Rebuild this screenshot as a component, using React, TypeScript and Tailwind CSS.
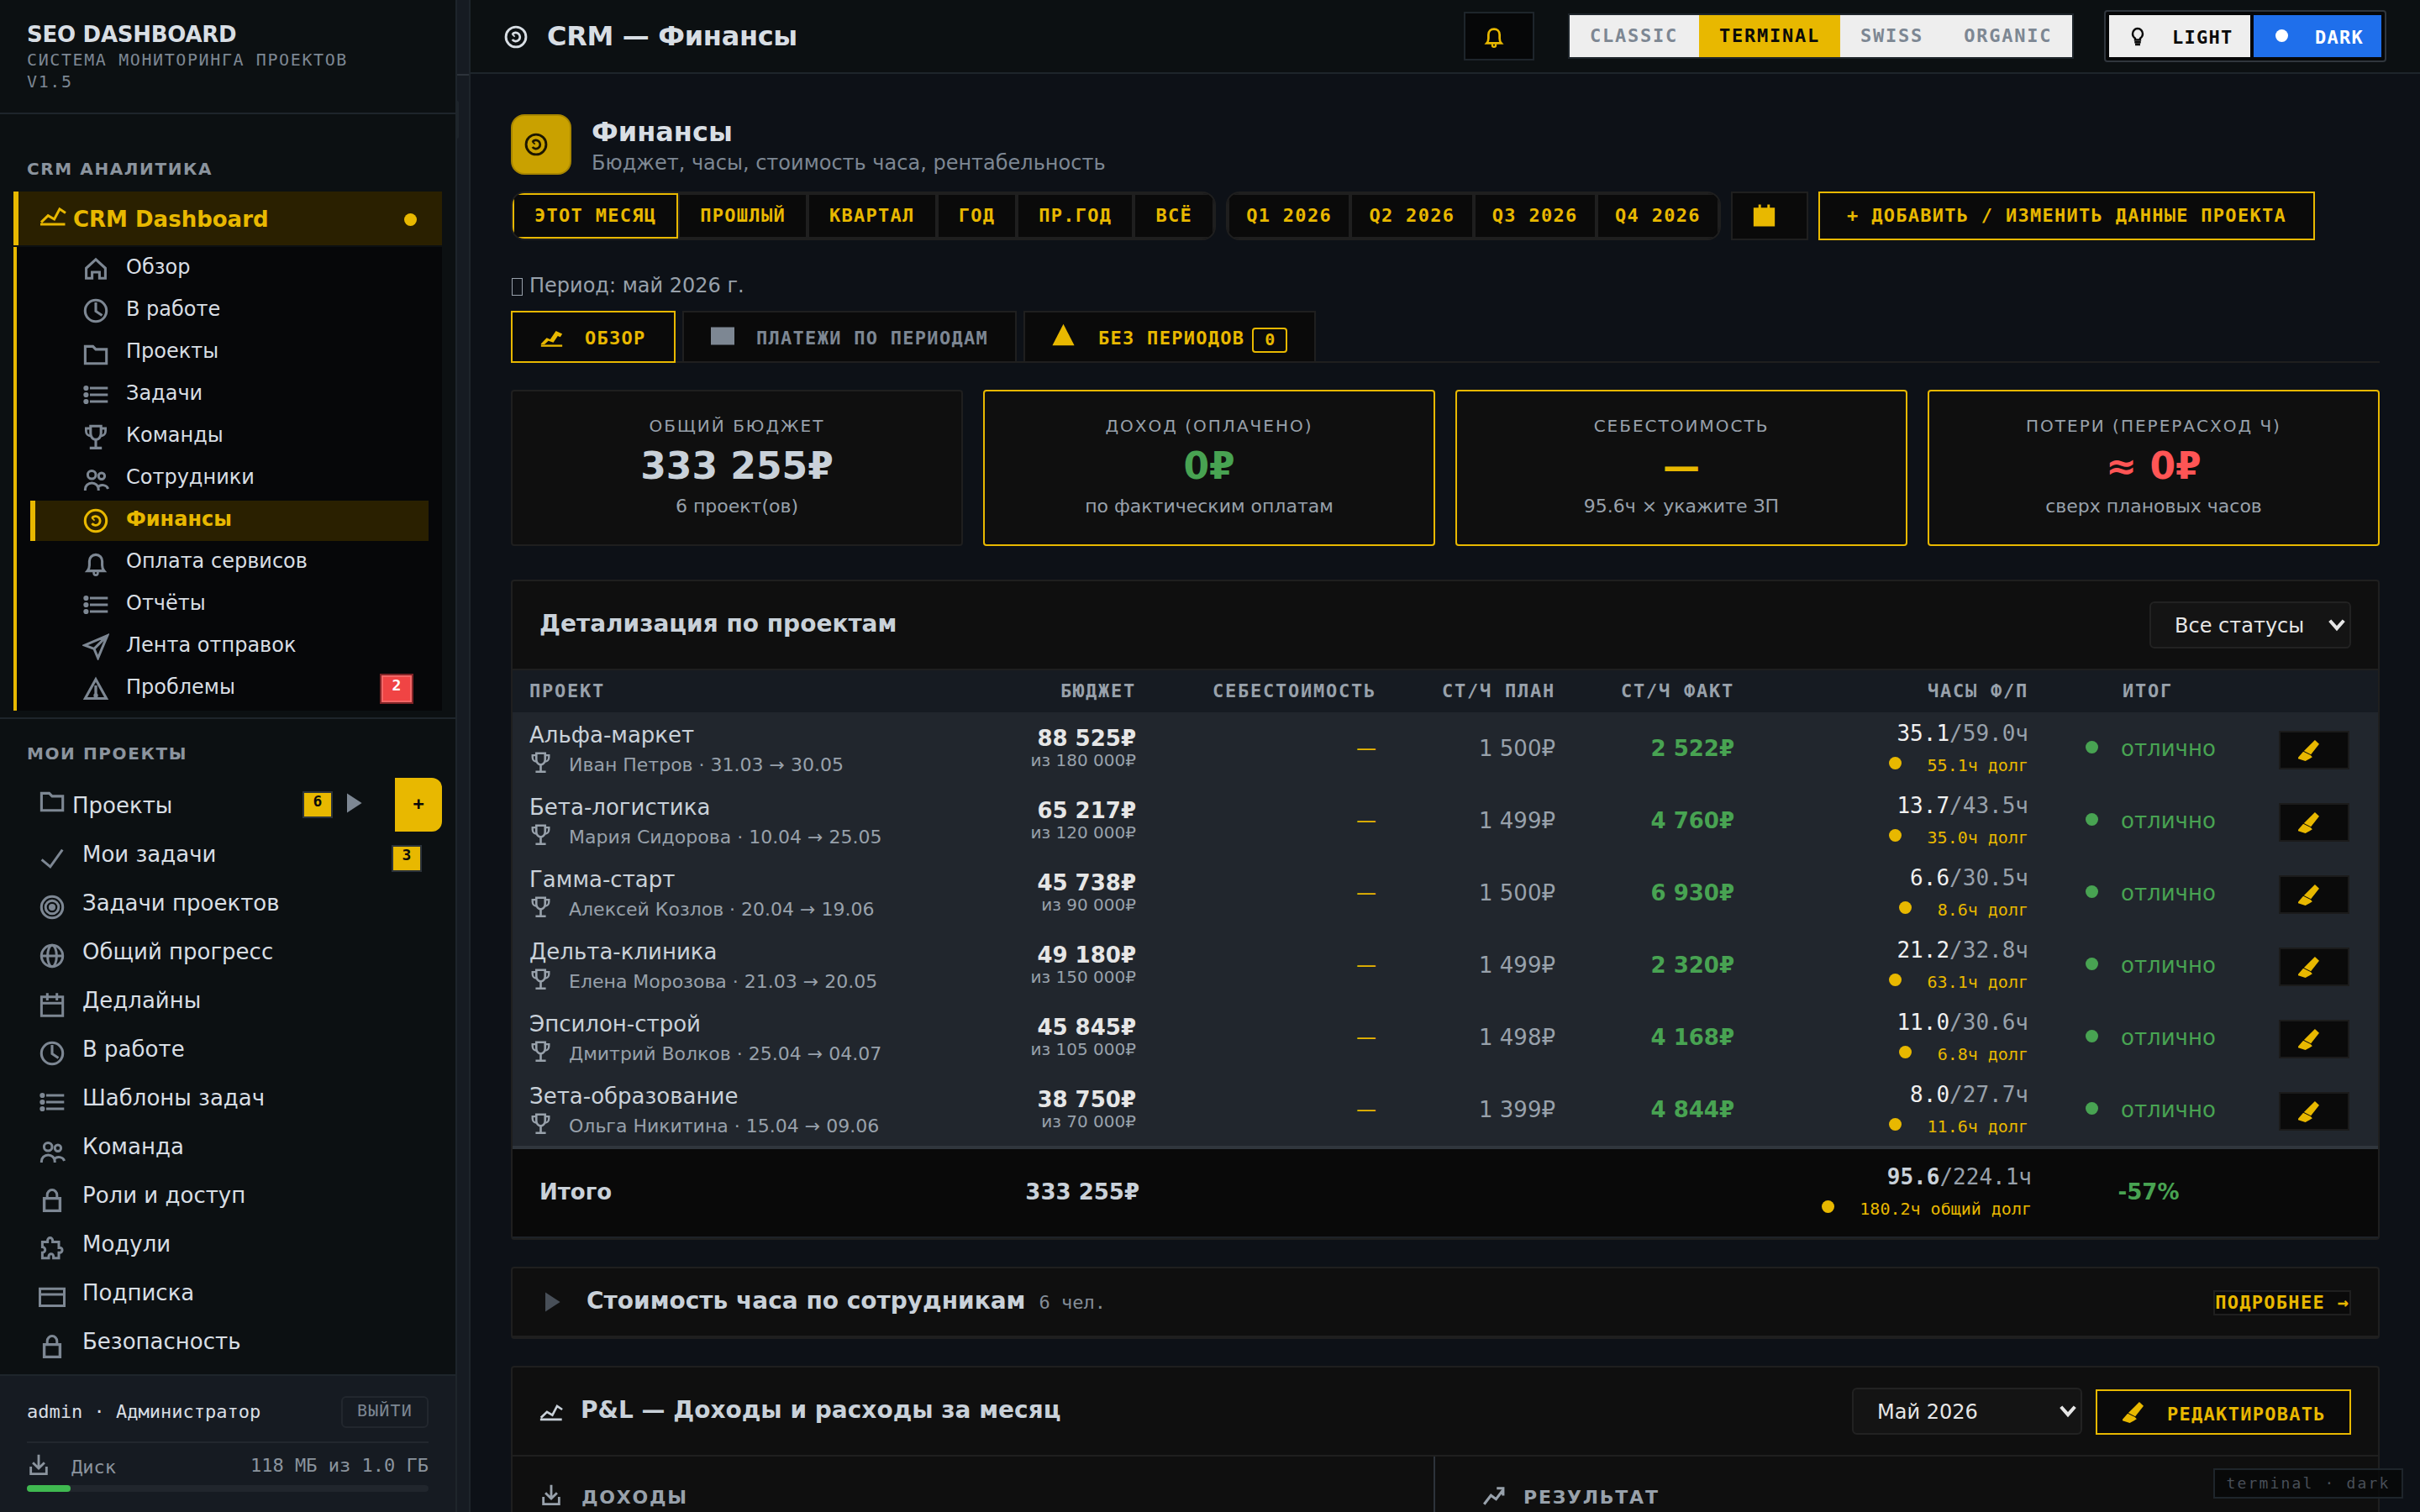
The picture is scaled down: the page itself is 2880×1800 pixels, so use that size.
import React from "react";

type IconName =
  | "home" | "clock" | "folder" | "list" | "trophy" | "users" | "coin" | "bell" | "send" | "warning"
  | "check" | "target" | "globe" | "calendar" | "lock" | "puzzle" | "card" | "chart" | "download"
  | "bulb" | "pencil" | "chartBold" | "square" | "triangle" | "calendarFill" | "trend" | "play" | "chevron";

const ICONS: Record<IconName, React.ReactNode> = {
  home: <path d="M16 4.8 4.6 15.3V27.2H11.6V20H20.4V27.2H27.4V15.3Z" strokeWidth="3.1" />,
  clock: (
    <>
      <circle cx="16" cy="16" r="12.7" strokeWidth="3.1" />
      <path d="M16 6V16.5L23.5 21.5" strokeWidth="3.1" />
    </>
  ),
  folder: <path d="M3.4 8.4H12.6L16 11.9H28.7V28.7H3.4Z" strokeWidth="3.1" />,
  list: (
    <>
      <path d="M9 8H30.3M9 16H30.3M9 24H30.3" strokeWidth="3.1" />
      <g fill="currentColor" stroke="none">
        <circle cx="4.4" cy="8" r="3.1" />
        <circle cx="4.4" cy="16" r="3.1" />
        <circle cx="4.4" cy="24" r="3.1" />
      </g>
    </>
  ),
  trophy: (
    <g strokeWidth="3.1">
      <path d="M9.8 3.2H22.2V12C22.2 16 19.5 19.4 16 19.4S9.8 16 9.8 12Z" />
      <path d="M9.8 6H4.4V9C4.4 12.5 6.8 15 10.2 15M22.2 6H27.6V9C27.6 12.5 25.2 15 21.8 15" strokeWidth="2.8" />
      <path d="M16 19.4V28M8.8 29.4H23.2" />
    </g>
  ),
  users: (
    <g strokeWidth="3">
      <circle cx="11.2" cy="11.3" r="4.8" />
      <circle cx="22.9" cy="12.7" r="3.7" />
      <path d="M3.4 30V28.5A7.9 7.6 0 0 1 19.2 28.5V30" />
      <path d="M18.5 26A6.8 6 0 0 1 30.6 28" />
    </g>
  ),
  coin: (
    <>
      <circle cx="16" cy="16" r="12.7" strokeWidth="3.1" />
      <path d="M11.4 12.8A5.4 5.4 0 1 1 11.4 19.2" strokeWidth="2.9" />
      <path d="M11.4 12.6 14.6 15.6" strokeWidth="1.8" />
    </>
  ),
  bell: (
    <g strokeWidth="3.1">
      <path d="M6.2 25.6H25.8C24.4 24 23.6 22 23.6 19V14C23.6 9.6 20.4 6.4 16 6.4S8.4 9.6 8.4 14V19C8.4 22 7.6 24 6.2 25.6Z" />
      <path d="M13.6 26.5V28.2A2.4 2.4 0 0 0 18.4 28.2V26.5" strokeWidth="2.6" />
    </g>
  ),
  send: <path d="M29.8 2.6 2.8 14.2 14 18.4 18.6 29.4ZM29.8 2.6 14 18.4" strokeWidth="3" />,
  warning: (
    <>
      <path d="M16 4.8 28.6 27.5H3.4Z" strokeWidth="3.1" />
      <path d="M16 12V27" strokeWidth="3.3" />
      <circle cx="16" cy="24" r="2.7" fill="currentColor" stroke="none" />
    </>
  ),
  check: <path d="M3.6 17.4 13.8 25.8 28.3 5.6" strokeWidth="3" />,
  target: (
    <>
      <circle cx="16" cy="16" r="12.7" strokeWidth="3.1" />
      <circle cx="16" cy="16" r="7.8" strokeWidth="3" />
      <circle cx="16" cy="16" r="4" fill="currentColor" stroke="none" />
    </>
  ),
  globe: (
    <g strokeWidth="3">
      <circle cx="16" cy="16" r="12.7" />
      <ellipse cx="16" cy="16" rx="5.4" ry="12.7" />
      <path d="M3 16H29" />
    </g>
  ),
  calendar: (
    <g strokeWidth="3">
      <path d="M3.4 6.8H28.7V29.3H3.4ZM3.4 14.2H28.7" />
      <path d="M10.3 2.2V11M21.7 2.2V11" />
    </g>
  ),
  lock: (
    <g strokeWidth="3">
      <path d="M6.6 14.6H25.4V29.4H6.6Z" strokeWidth="3.4" />
      <path d="M10.2 14.6V10.6A5.8 6 0 0 1 21.8 10.6V14.6" />
    </g>
  ),
  puzzle: (
    <path
      d="M4.4 27.8V21.2A3.2 3.2 0 0 0 4.4 14.6V8.6H10.6V6.6A3 3 0 0 1 16.6 6.6V8.6H24V15.4H25.8A3 3 0 0 1 25.8 21.2H24V27.8H17.6V25.6A2.8 2.8 0 0 0 12 25.6V27.8Z"
      strokeWidth="3"
    />
  ),
  card: <path d="M1.5 6.2H30.5V26.6H1.5ZM1.5 13H30.5" strokeWidth="3" />,
  chart: <path d="M1 25H30.5M2 22.6 10.2 14.6 17.6 19 24 6.8 31 11.4" strokeWidth="3" />,
  download: <path d="M16 1V21M7.5 12.5 16 21 24.5 12.5M4.5 18.5V29H27.5V18.5" strokeWidth="3.5" />,
  bulb: (
    <>
      <path d="M12 22V19.5C9.5 17.8 8 15.3 8 12.3A8 8.3 0 0 1 24 12.3C24 15.3 22.5 17.8 20 19.5V22Z" strokeWidth="3.2" />
      <path d="M11 25.6H21M12 29.4H20" strokeWidth="3.2" />
    </>
  ),
  pencil: (
    <g fill="currentColor" stroke="none">
      <path d="M25.5 0 32 6 19.4 22 8.8 16.6Z" />
      <path d="M7.8 17.6 18.8 23 21.6 26 17.5 28.5 11 32 0 28.6V26.5Z" />
    </g>
  ),
  chartBold: (
    <g fill="currentColor" stroke="none">
      <path d="M1 23H31V25.8H1Z" />
      <path d="M1 21.7 9 13.2 14 15.4 22 3.6 31 7.8 28.2 12.2 24.6 10.8 18.4 19.8 11.4 17.4 6 22.5 1 22.5Z" />
    </g>
  ),
  square: <path d="M0 4H32V28H0Z" fill="currentColor" stroke="none" />,
  triangle: <path d="M16 1 31.5 31H.5Z" fill="currentColor" stroke="none" />,
  calendarFill: <path d="M1 5H8V.5H11.5V5H20.5V.5H24V5H31V31.5H1Z" fill="currentColor" stroke="none" />,
  trend: <path d="M1.5 28 11.5 15 19 20.5 28.5 8M20 4.6H29.4V15.5" strokeWidth="3.8" />,
  play: <path d="M7 4.6 24.6 16 7 27.4Z" fill="currentColor" stroke="none" />,
  chevron: <path d="M5 9 16 21.5 27 9" strokeWidth="5.5" />,
};

function Icon({ name, className }: { name: IconName; className: string }) {
  return (
    <svg viewBox="0 0 32 32" fill="none" stroke="currentColor" strokeWidth="3" className={"shrink-0 " + className}>
      {ICONS[name]}
    </svg>
  );
}

const SANS = "font-['DejaVu_Sans',sans-serif]";
const MONO = "font-['DejaVu_Sans_Mono',monospace]";

const SUB_NAV: { icon: IconName; label: string; active?: boolean; badge?: string }[] = [
  { icon: "home", label: "Обзор" },
  { icon: "clock", label: "В работе" },
  { icon: "folder", label: "Проекты" },
  { icon: "list", label: "Задачи" },
  { icon: "trophy", label: "Команды" },
  { icon: "users", label: "Сотрудники" },
  { icon: "coin", label: "Финансы", active: true },
  { icon: "bell", label: "Оплата сервисов" },
  { icon: "list", label: "Отчёты" },
  { icon: "send", label: "Лента отправок" },
  { icon: "warning", label: "Проблемы", badge: "2" },
];

const NAV: { icon: IconName; label: string; badge?: string }[] = [
  { icon: "check", label: "Мои задачи", badge: "3" },
  { icon: "target", label: "Задачи проектов" },
  { icon: "globe", label: "Общий прогресс" },
  { icon: "calendar", label: "Дедлайны" },
  { icon: "clock", label: "В работе" },
  { icon: "list", label: "Шаблоны задач" },
  { icon: "users", label: "Команда" },
  { icon: "lock", label: "Роли и доступ" },
  { icon: "puzzle", label: "Модули" },
  { icon: "card", label: "Подписка" },
  { icon: "lock", label: "Безопасность" },
];

const ROWS = [
  { name: "Альфа-маркет", sub: "Иван Петров · 31.03 → 30.05", budget: "88 525₽", of: "из 180 000₽", plan: "1 500₽", fact: "2 522₽", h: "35.1", hp: "/59.0ч", debt: "55.1ч долг" },
  { name: "Бета-логистика", sub: "Мария Сидорова · 10.04 → 25.05", budget: "65 217₽", of: "из 120 000₽", plan: "1 499₽", fact: "4 760₽", h: "13.7", hp: "/43.5ч", debt: "35.0ч долг" },
  { name: "Гамма-старт", sub: "Алексей Козлов · 20.04 → 19.06", budget: "45 738₽", of: "из 90 000₽", plan: "1 500₽", fact: "6 930₽", h: "6.6", hp: "/30.5ч", debt: "8.6ч долг" },
  { name: "Дельта-клиника", sub: "Елена Морозова · 21.03 → 20.05", budget: "49 180₽", of: "из 150 000₽", plan: "1 499₽", fact: "2 320₽", h: "21.2", hp: "/32.8ч", debt: "63.1ч долг" },
  { name: "Эпсилон-строй", sub: "Дмитрий Волков · 25.04 → 04.07", budget: "45 845₽", of: "из 105 000₽", plan: "1 498₽", fact: "4 168₽", h: "11.0", hp: "/30.6ч", debt: "6.8ч долг" },
  { name: "Зета-образование", sub: "Ольга Никитина · 15.04 → 09.06", budget: "38 750₽", of: "из 70 000₽", plan: "1 399₽", fact: "4 844₽", h: "8.0", hp: "/27.7ч", debt: "11.6ч долг" },
];

const KPIS = [
  { label: "ОБЩИЙ БЮДЖЕТ", value: "333 255₽", sub: "6 проект(ов)", border: "border-[#1f1f1f]", color: "text-[#c9d1d9]" },
  { label: "ДОХОД (ОПЛАЧЕНО)", value: "0₽", sub: "по фактическим оплатам", border: "border-[#e8b800]", color: "text-[#48a352]" },
  { label: "СЕБЕСТОИМОСТЬ", value: "—", sub: "95.6ч × укажите ЗП", border: "border-[#e8b800]", color: "text-[#e8b800]" },
  { label: "ПОТЕРИ (ПЕРЕРАСХОД Ч)", value: "≈ 0₽", sub: "сверх плановых часов", border: "border-[#e8b800]", color: "text-[#ff5555]" },
];

const GRID = "grid grid-cols-[520px_222px_286px_213px_213px_350px_284px_132px]";
const BTN = MONO + " text-[22px] font-bold tracking-[1.28px] whitespace-pre";

function Sidebar() {
  return (
    <aside className="flex h-full w-[544px] shrink-0 flex-col border-r-2 border-[#1e252b] bg-[#0c1012]">
      <div className="h-[136px] shrink-0 border-b-2 border-[#1e252b] px-8 pt-[25px]">
        <div className="text-[26px] leading-8 font-bold tracking-[-0.26px] text-[#d8dee4]">SEO DASHBOARD</div>
        <div className={MONO + " mt-px w-[400px] text-[20px] leading-[26px] tracking-[1.6px] text-[#7d8793]"}>
          СИСТЕМА МОНИТОРИНГА ПРОЕКТОВ V1.5
        </div>
      </div>
      <div className="mt-[49px] pl-8 text-[20px] leading-8 font-bold tracking-[1.6px] text-[#8b949e]">CRM АНАЛИТИКА</div>
      <div className="mt-[11px] ml-4 flex h-16 w-[510px] shrink-0 border-l-[6px] border-[#e8b800] bg-[#2a2000] text-[#e8b800]">
        <Icon name="chart" className="mt-[14px] ml-[25px] size-8" />
        <span className="ml-2 text-[26px] leading-[66px] font-bold">CRM Dashboard</span>
        <span className="mt-[26px] mr-[30px] ml-auto size-[15px] rounded-full bg-[#e8b800]" />
      </div>
      <div className="mt-0.5 ml-4 h-[552px] w-[510px] shrink-0 border-l-4 border-[#e8b800] bg-[#060709] pt-0.5 pr-4 pl-4">
        {SUB_NAV.map((n) => (
          <div
            key={n.label}
            className={
              "mb-0.5 flex h-12 items-start border-l-[6px] pl-14 " +
              (n.active ? "border-[#e8b800] bg-[#2a2000] text-[#e8b800]" : "border-transparent text-[#7d8793]")
            }
          >
            <Icon name={n.icon} className="mt-2 size-8" />
            <span className={"ml-5 text-[24px] leading-[44px] " + (n.active ? "font-bold text-[#e8b800]" : "text-[#d8dee4]")}>
              {n.label}
            </span>
            {n.badge && (
              <span className={MONO + " mt-1.5 mr-[18px] ml-auto h-9 w-10 border-2 border-[#7f2326] bg-[#f04444] pt-0.5 text-center text-[18px] leading-5 font-bold text-white shadow-[inset_0_0_0_2px_#f26666]"}>
                {n.badge}
              </span>
            )}
          </div>
        ))}
      </div>
      <div className="mt-2 h-0.5 shrink-0 bg-[#1e252b]" />
      <div className="mt-[25px] pl-8 text-[20px] leading-8 font-bold tracking-[1.6px] text-[#8b949e]">МОИ ПРОЕКТЫ</div>
      <div className="mt-[13px] ml-4 flex h-16 w-[510px] shrink-0 items-start text-[#7d8793]">
        <Icon name="folder" className="mt-[10px] ml-[30px] size-8" />
        <span className="ml-2 text-[26px] leading-[66px] text-[#d8dee4]">Проекты</span>
        <span className={MONO + " mt-4 ml-auto h-8 w-9 border-2 border-[#2c333a] bg-[#e8b800] text-center text-[18px] leading-5 font-bold text-[#0a0a0a]"}>6</span>
        <Icon name="play" className="mt-[14px] ml-[10px] size-8" />
        <span className={MONO + " ml-8 h-16 w-14 rounded-r-[12px] bg-[#e8b800] text-center text-[22px] leading-[62px] font-bold text-[#0a0a0a]"}>+</span>
      </div>
      <div className="mt-[3px]">
        {NAV.map((n) => (
          <div key={n.label} className="flex h-[58px] items-start pl-[46px] text-[#7d8793]">
            <Icon name={n.icon} className="mt-[13px] size-8" />
            <span className="ml-5 text-[26px] leading-[48px] text-[#d8dee4]">{n.label}</span>
            {n.badge && (
              <span className={MONO + " mt-[13px] mr-10 ml-auto h-8 w-9 border-2 border-[#2c333a] bg-[#e8b800] text-center text-[18px] leading-5 font-bold text-[#0a0a0a]"}>
                {n.badge}
              </span>
            )}
          </div>
        ))}
      </div>
      <div className={MONO + " mt-auto h-[164px] shrink-0 border-t-2 border-[#1e252b] bg-[#161b22] px-8 pt-6 text-[22px]"}>
        <div className="flex h-[38px] justify-between">
          <span className="leading-[37px] text-[#d8dee4]">admin · Администратор</span>
          <span className="h-[38px] w-[104px] rounded-[6px] border-2 border-[#22272e] text-center text-[20px] leading-[30px] tracking-[1.2px] text-[#7d8793]">
            ВЫЙТИ
          </span>
        </div>
        <div className="mt-4 h-0.5 bg-[#22272e]" />
        <div className="flex h-[50px] items-start text-[#8b949e]">
          <Icon name="download" className="mt-[13px] ml-px size-[26px]" />
          <span className="mt-[13px] ml-[26px] leading-8">Диск</span>
          <span className="mt-[11px] ml-auto leading-8">118 МБ из 1.0 ГБ</span>
        </div>
        <div className="h-2 rounded-full bg-[#21262d]">
          <div className="h-2 w-[52px] rounded-full bg-[#3fb950]" />
        </div>
      </div>
    </aside>
  );
}

function TopBar() {
  const seg = MONO + " pl-6 text-[22px] leading-[50px] font-bold tracking-[1.76px] ";
  return (
    <header className="flex h-[88px] shrink-0 border-b-2 border-[#1e252b] bg-[#0c1012] pr-10 pl-[39px] text-[#d8dee4]">
      <Icon name="coin" className="mt-[29px] size-[30px]" />
      <h1 className="ml-[22px] text-[32px] leading-[86px] font-bold tracking-[-0.32px]">CRM — Финансы</h1>
      <div className="mt-[14px] ml-auto h-[58px] w-[84px] border-2 border-[#1e252b] bg-[#060708] text-[#e8b800]">
        <Icon name="bell" className="mt-[13px] ml-[20px] size-[28px]" />
      </div>
      <div className="mt-4 ml-10 flex h-[54px] w-[602px] border-2 border-[#1e252b] bg-[#eeeeee]">
        <span className={seg + "pr-[25px] text-[#7d8793]"}>CLASSIC</span>
        <span className={seg + "bg-[#e8b800] pr-6 text-[#0a0a0a]"}>TERMINAL</span>
        <span className={seg + "pr-6 text-[#7d8793]"}>SWISS</span>
        <span className={seg + "pr-5 text-[#7d8793]"}>ORGANIC</span>
      </div>
      <div className={BTN + " mt-3 ml-9 flex h-[62px] w-[336px] gap-1 rounded-[4px] border-2 border-[#30363d] bg-[#060708] p-1"}>
        <span className="flex w-[168px] bg-[#eeeeee] text-[#0a0a0a]">
          <Icon name="bulb" className="mt-[13px] ml-[22px] size-[24px]" />
          <span className="ml-[29px] leading-[53px]">LIGHT</span>
        </span>
        <span className="flex w-[152px] bg-[#1f6feb] text-white">
          <span className="mt-[17px] ml-[26px] size-[15px] rounded-full bg-white" />
          <span className="ml-8 leading-[53px]">DARK</span>
        </span>
      </div>
    </header>
  );
}

function PeriodGroup({ items, pad, active }: { items: string[]; pad: string; active?: string }) {
  return (
    <div className="flex h-[58px] overflow-hidden rounded-[16px] border-2 border-[#1f1f1f] bg-[#0a0a0a]">
      {items.map((t) => (
        <span
          key={t}
          className={BTN + " border-2 leading-[50px] text-[#e8b800] " + pad + (t === active ? " border-[#e8b800]" : " border-[#1f1f1f]")}
        >
          {t}
        </span>
      ))}
    </div>
  );
}

function Controls() {
  return (
    <div className="mt-5 flex h-[58px] gap-3">
      <PeriodGroup items={["ЭТОТ МЕСЯЦ", "ПРОШЛЫЙ", "КВАРТАЛ", "ГОД", "ПР.ГОД", "ВСЁ"]} pad="px-6" active="ЭТОТ МЕСЯЦ" />
      <PeriodGroup items={["Q1 2026", "Q2 2026", "Q3 2026", "Q4 2026"]} pad="px-[20.3px]" />
      <div className="h-[58px] w-[92px] border-2 border-[#1f1f1f] bg-[#0a0a0a] text-[#e8b800]">
        <Icon name="calendarFill" className="mt-[13px] ml-6 size-[27px]" />
      </div>
      <div className={BTN + " border-2 border-[#e8b800] bg-[#0a0a0a] px-8 leading-[54px] text-[#e8b800]"}>
        + ДОБАВИТЬ / ИЗМЕНИТЬ ДАННЫЕ ПРОЕКТА
      </div>
    </div>
  );
}

function Tabs() {
  const tab = BTN + " flex h-[62px] border-2 bg-[#0a0a0a] ";
  return (
    <div className="mt-[14px] flex h-[62px] gap-2 shadow-[inset_0_-2px_0_#1f1f1f]">
      <div className={tab + "w-[196px] border-[#e8b800] text-[#e8b800]"}>
        <Icon name="chartBold" className="mt-[19px] ml-[33px] size-[27px]" />
        <span className="mt-0.5 ml-[26px] leading-[58px]">ОБЗОР</span>
      </div>
      <div className={tab + "w-[398px] border-[#1f1f1f] text-[#7d8793]"}>
        <Icon name="square" className="mt-[14px] ml-8 size-7" />
        <span className="mt-0.5 ml-[26px] leading-[58px]">ПЛАТЕЖИ ПО ПЕРИОДАМ</span>
      </div>
      <div className={tab + "w-[348px] border-[#1f1f1f] text-[#e8b800]"}>
        <Icon name="triangle" className="mt-[13px] ml-8 size-[27px]" />
        <span className="mt-0.5 ml-7 leading-[58px]">БЕЗ ПЕРИОДОВ</span>
        <span className="mt-[18px] ml-[9px] h-[30px] w-[42px] rounded-[4px] border-2 border-[#e8b800] text-center text-[20px] leading-[24px] tracking-normal">0</span>
      </div>
    </div>
  );
}

function Select({ label, className }: { label: string; className: string }) {
  return (
    <div className={"flex h-14 rounded-[6px] border-2 border-[#222222] bg-[#141414] pl-7 text-[24px] leading-[54px] text-[#e6e6e6] " + className}>
      <span>{label}</span>
      <Icon name="chevron" className="mt-[14px] mr-[3px] ml-auto size-6" />
    </div>
  );
}

function ProjectTable() {
  return (
    <section className="mt-10 rounded-[4px] border-2 border-[#1f1f1f] bg-[#0f0f0f]">
      <div className="flex h-[106px] justify-between border-b-2 border-[#1f1f1f] pr-8 pl-8">
        <h2 className="text-[28px] leading-[101px] font-bold text-[#c9d1d9]">Детализация по проектам</h2>
        <Select label="Все статусы" className="mt-6 w-[240px]" />
      </div>
      <div className={GRID + " " + MONO + " h-[50px] bg-[#161b22] text-right text-[22px] leading-[50px] font-bold tracking-[1.76px] text-[#98a1ab]"}>
        <span className="pl-5 text-left">ПРОЕКТ</span>
        <span>БЮДЖЕТ</span>
        <span>СЕБЕСТОИМОСТЬ</span>
        <span>СТ/Ч ПЛАН</span>
        <span>СТ/Ч ФАКТ</span>
        <span>ЧАСЫ Ф/П</span>
        <span className="text-center">ИТОГ</span>
      </div>
      {ROWS.map((r) => (
        <div key={r.name} className={GRID + " h-[86px] bg-[#21262d] text-right text-[26px] leading-[86px]"}>
          <div className="pt-[11px] pl-5 text-left">
            <div className="leading-8 text-[#c9d1d9]">{r.name}</div>
            <div className="mt-[3px] flex text-[22px] leading-8 text-[#98a1ab]">
              <Icon name="trophy" className="size-[27px]" />
              <span className="mt-px ml-5">{r.sub}</span>
            </div>
          </div>
          <div className="pt-[15px]">
            <div className="leading-8 font-bold text-[#e6e6e6]">{r.budget}</div>
            <div className="text-[20px] leading-5 text-[#98a1ab]">{r.of}</div>
          </div>
          <div className="text-[24px] text-[#e8b800]">—</div>
          <div className="text-[#98a1ab]">{r.plan}</div>
          <div className="font-bold text-[#48a352]">{r.fact}</div>
          <div className={MONO + " pt-[9px]"}>
            <div className="leading-8 text-[#98a1ab]">
              <span className="text-[#f0f0f0]">{r.h}</span>
              {r.hp}
            </div>
            <div className="mt-1.5 flex items-start justify-end text-[20px] leading-8 text-[#e8b800]">
              <span className="mt-[6px] mr-[31px] size-[15px] rounded-full bg-[#e8b800]" />
              {r.debt}
            </div>
          </div>
          <div className="flex pl-[68px] text-[#48a352]">
            <span className="mt-[34px] size-[15px] rounded-full bg-[#48a352]" />
            <span className="ml-[27px]">отлично</span>
          </div>
          <div className="pt-[22px] pl-[14px]">
            <div className="h-[46px] w-[84px] border-2 border-[#1b1b1b] bg-[#0a0a0a] text-[#e8b800]">
              <Icon name="pencil" className="mt-[9px] ml-[21px] size-[25px]" />
            </div>
          </div>
        </div>
      ))}
      <div className={GRID + " h-[110px] border-t-4 border-b-2 border-t-[#30363d] border-b-[#1e2228] bg-[#090909] text-right text-[26px] leading-[103px] font-bold text-[#c9d1d9]"}>
        <span className="pl-8 text-left">Итого</span>
        <span className="-mr-1">333 255₽</span>
        <span />
        <span />
        <span />
        <div className={MONO + " -mr-1 pt-[17px]"}>
          <div className="leading-8">
            95.6<span className="font-normal text-[#98a1ab]">/224.1ч</span>
          </div>
          <div className="mt-1.5 flex items-start justify-end text-[20px] leading-8 font-normal text-[#e8b800]">
            <span className="mt-[6px] mr-[30px] size-[15px] rounded-full bg-[#e8b800]" />
            180.2ч общий долг
          </div>
        </div>
        <span className="pl-0.5 text-center text-[#48a352]">-57%</span>
      </div>
    </section>
  );
}

function HourCost() {
  return (
    <section className="mt-8 flex h-[86px] items-start rounded-[4px] border-2 border-b-4 border-[#1f1f1f] bg-[#0f0f0f] pr-8 pl-8">
      <Icon name="play" className="mt-6 size-8 text-[#484f58]" />
      <h2 className="ml-6 text-[28px] leading-[77px] font-bold text-[#c9d1d9]">Стоимость часа по сотрудникам</h2>
      <span className={MONO + " ml-4 text-[22px] leading-[81px] text-[#848d97]"}>6 чел.</span>
      <span className={BTN + " mt-[26px] ml-auto h-[30px] border-2 border-[#1f1f1f] bg-[#0a0a0a] leading-[26px] text-[#e8b800]"}>ПОДРОБНЕЕ →</span>
    </section>
  );
}

function ProfitLoss() {
  return (
    <section className="mt-8 h-[300px] shrink-0 rounded-[4px] border-2 border-[#1f1f1f] bg-[#0f0f0f]">
      <div className="flex h-[106px] items-start border-b-2 border-[#1f1f1f] pr-8 pl-8 text-[#c9d1d9]">
        <Icon name="chart" className="mt-[40px] size-[28px]" />
        <h2 className="ml-[21px] text-[28px] leading-[101px] font-bold">P&amp;L — Доходы и расходы за месяц</h2>
        <Select label="Май 2026" className="mt-6 ml-auto w-[274px]" />
        <div className={BTN + " mt-[26px] ml-4 flex h-[54px] w-[304px] border-2 border-[#e8b800] bg-[#0a0a0a] text-[#e8b800]"}>
          <Icon name="pencil" className="mt-[13px] ml-[30px] size-[25px]" />
          <span className="ml-7 leading-[56px]">РЕДАКТИРОВАТЬ</span>
        </div>
      </div>
      <div className="flex h-[190px] text-[22px] leading-8 font-bold tracking-[1.76px] text-[#98a1ab]">
        <div className="flex w-[1098px] border-r-2 border-[#2d333b] pt-[33px] pl-[33px]">
          <Icon name="download" className="size-[26px]" />
          <span className="ml-[23px]">ДОХОДЫ</span>
        </div>
        <div className="flex pt-[33px] pl-[57px]">
          <Icon name="trend" className="mt-px size-[26px]" />
          <span className="ml-[22px]">РЕЗУЛЬТАТ</span>
        </div>
      </div>
    </section>
  );
}

export default function App() {
  return (
    <div className={SANS + " relative flex h-[1800px] w-[2880px] overflow-hidden bg-[#0d1117]"}>
      <Sidebar />
      <div className="h-full w-4 shrink-0 border-r-2 border-[#1e252b] bg-[#161b22] pt-[88px]">
        <div className="h-0.5 bg-[#2d333b]" />
        <div className="mt-[30px] h-[45px] w-0.5 rounded-r-sm bg-[#1e252b]" />
      </div>
      <div className="flex min-w-0 flex-1 flex-col">
        <TopBar />
        <main className="px-12 pt-12">
          <div className="flex h-[72px] gap-6">
            <div className="size-[72px] rounded-[16px] border-2 border-[#a88600] bg-[#c9a100] text-[#1c1600]">
              <Icon name="coin" className="mt-[19px] ml-[13px] size-[30px]" />
            </div>
            <div>
              <div className="text-[32px] leading-[42px] font-bold text-[#d8dee4]">Финансы</div>
              <div className="text-[24px] leading-8 text-[#7d8793]">Бюджет, часы, стоимость часа, рентабельность</div>
            </div>
          </div>
          <Controls />
          <div className="mt-[38px] flex text-[24px] leading-8 text-[#98a1ab]">
            <span className="mt-[7px] mr-2 ml-px h-[21px] w-[13px] border border-[#98a1ab]" />
            Период: май 2026 г.
          </div>
          <Tabs />
          <div className="mt-8 grid grid-cols-4 gap-6">
            {KPIS.map((k) => (
              <div key={k.label} className={"h-[186px] rounded-[4px] border-2 bg-[#0f0f0f] pt-[25px] text-center text-[#98a1ab] " + k.border}>
                <div className="text-[20px] leading-8 tracking-[2px]">{k.label}</div>
                <div className={"mt-1.5 text-[44px] leading-[52px] font-bold " + k.color}>{k.value}</div>
                <div className="mt-1.5 text-[22px] leading-8">{k.sub}</div>
              </div>
            ))}
          </div>
          <ProjectTable />
          <HourCost />
          <ProfitLoss />
        </main>
      </div>
      <div className={MONO + " absolute right-5 bottom-4 h-9 w-[226px] border-2 border-[#1e252b] bg-[#060708]/80 text-center text-[18px] leading-8 tracking-[2.16px] text-[#484f58]"}>
        terminal · dark
      </div>
    </div>
  );
}
